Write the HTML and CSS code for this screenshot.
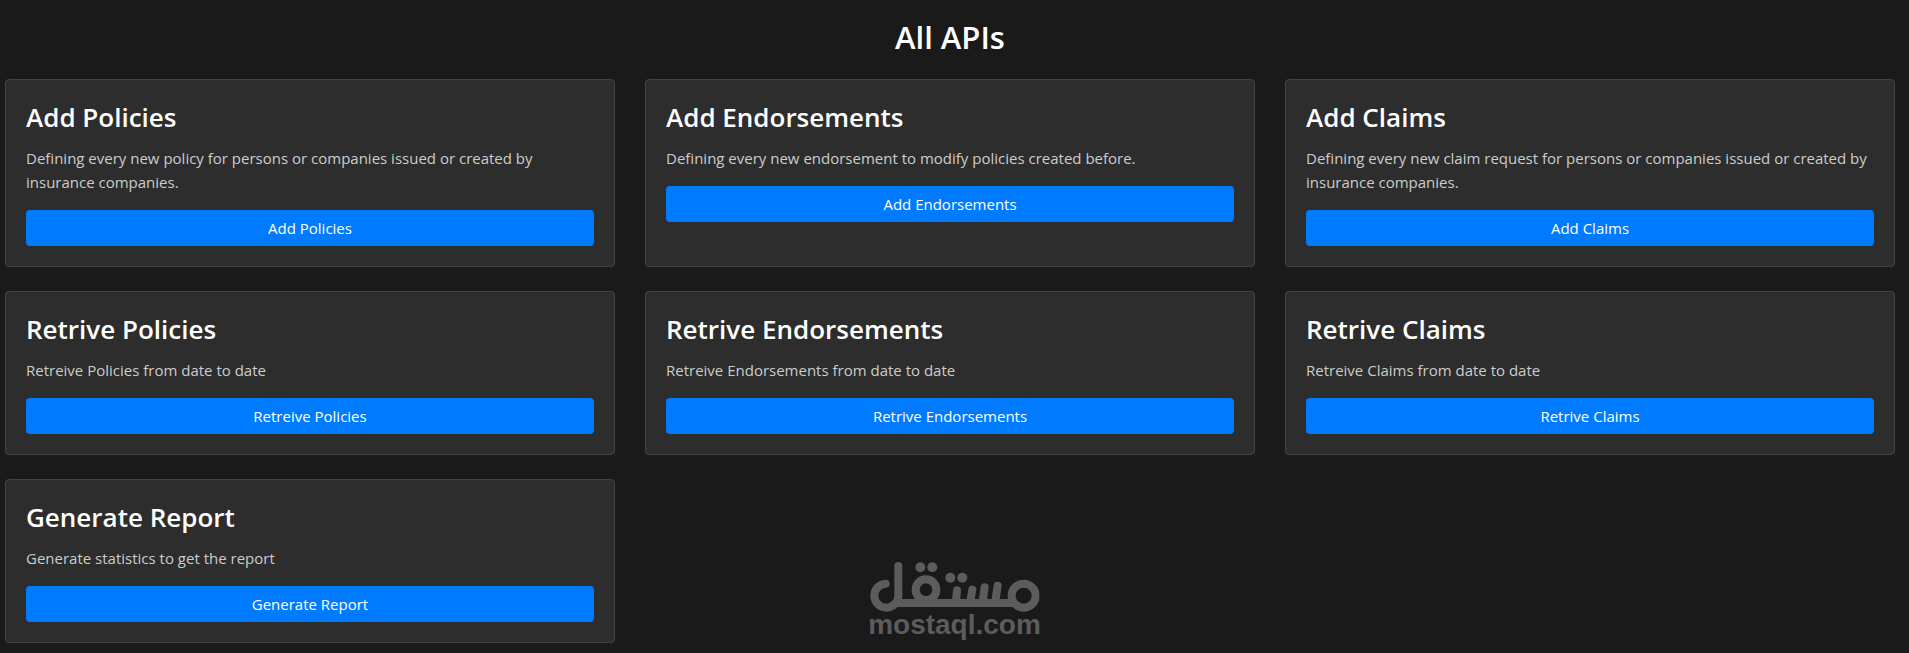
FILE: index.html
```
<!DOCTYPE html>
<html lang="en">
<head>
    <meta charset="UTF-8">
    <meta name="viewport" content="width=device-width, initial-scale=1.0">
    <title>All APIs</title>
    <link rel="stylesheet" href="styles.css">
</head>
<body>
    <main class="container">
        <h1>All APIs</h1>
        <div class="cards">
            <div class="card">
                <h2>Add Policies</h2>
                <p>Defining every new policy for persons or companies issued or created by insurance companies.</p>
                <button type="button" class="btn">Add Policies</button>
            </div>
            <div class="card">
                <h2>Add Endorsements</h2>
                <p>Defining every new endorsement to modify policies created before.</p>
                <button type="button" class="btn">Add Endorsements</button>
            </div>
            <div class="card">
                <h2>Add Claims</h2>
                <p>Defining every new claim request for persons or companies issued or created by insurance companies.</p>
                <button type="button" class="btn">Add Claims</button>
            </div>
            <div class="card">
                <h2>Retrive Policies</h2>
                <p>Retreive Policies from date to date</p>
                <button type="button" class="btn">Retreive Policies</button>
            </div>
            <div class="card">
                <h2>Retrive Endorsements</h2>
                <p>Retreive Endorsements from date to date</p>
                <button type="button" class="btn">Retrive Endorsements</button>
            </div>
            <div class="card">
                <h2>Retrive Claims</h2>
                <p>Retreive Claims from date to date</p>
                <button type="button" class="btn">Retrive Claims</button>
            </div>
            <div class="card">
                <h2>Generate Report</h2>
                <p>Generate statistics to get the report</p>
                <button type="button" class="btn">Generate Report</button>
            </div>
        </div>
    </main>

    <div class="watermark">
        <svg class="watermark-logo" viewBox="57 36 510 151" aria-hidden="true">
            <g fill="none" stroke="currentColor" stroke-width="24" stroke-linecap="round">
                <path d="M105 101 A36 36 0 1 0 143 137 V48"/>
                <path d="M130 159 H494" stroke-linecap="butt"/>
                <circle cx="226" cy="119" r="31"/>
                <circle cx="519" cy="137" r="36"/>
                <path d="M319 121 L316 155 M365 119 L359 155 M402 112 L396 155 M441 107 L434 155"/>
            </g>
            <g fill="currentColor">
                <circle cx="209" cy="52" r="15"/>
                <circle cx="245" cy="52" r="15"/>
                <circle cx="299" cy="83" r="15"/>
                <circle cx="335" cy="83" r="15"/>
            </g>
        </svg>
        <span class="watermark-text">mostaql.com</span>
    </div>
</body>
</html>
```

FILE: styles.css
```
* {
    box-sizing: border-box;
}

body {
    margin: 0;
    min-height: 100vh;
    position: relative;
    background-color: #1a1a1a;
    color: #fff;
    font-family: 'Segoe UI', 'Open Sans', 'Noto Sans', sans-serif;
    font-size: 15px;
    line-height: 24px;
}

.container {
    padding: 18px 14px 0 5px;
}

h1 {
    margin: 0 0 23px;
    font-size: 31px;
    font-weight: 600;
    line-height: 38px;
    text-align: center;
}

.cards {
    display: grid;
    grid-template-columns: repeat(3, 1fr);
    gap: 24px 30px;
}

.card {
    padding: 20px;
    background-color: #2d2d2d;
    border: 1px solid #444;
    border-radius: 4px;
}

.card h2 {
    margin: 0 0 11px;
    font-size: 26px;
    font-weight: 600;
    line-height: 35px;
}

.card p {
    margin: 0 0 16px;
    color: #ccc;
}

.btn {
    display: block;
    width: 100%;
    padding: 6px 12px;
    border: none;
    border-radius: 4px;
    background-color: #007bff;
    color: #fff;
    font: inherit;
    cursor: pointer;
}

.btn:hover {
    background-color: #0069d9;
}

.watermark {
    position: absolute;
    bottom: 15px;
    left: 50%;
    transform: translateX(-50%);
    display: flex;
    flex-direction: column;
    align-items: center;
    color: #5c5c5c;
    pointer-events: none;
}

.watermark-logo {
    display: block;
    width: 170px;
}

.watermark-text {
    font-family: Arial, 'Liberation Sans', sans-serif;
    font-size: 28px;
    font-weight: 700;
    line-height: 26px;
}

@media (max-width: 992px) {
    .cards {
        grid-template-columns: repeat(2, 1fr);
    }
}

@media (max-width: 600px) {
    .cards {
        grid-template-columns: 1fr;
    }
}
```
